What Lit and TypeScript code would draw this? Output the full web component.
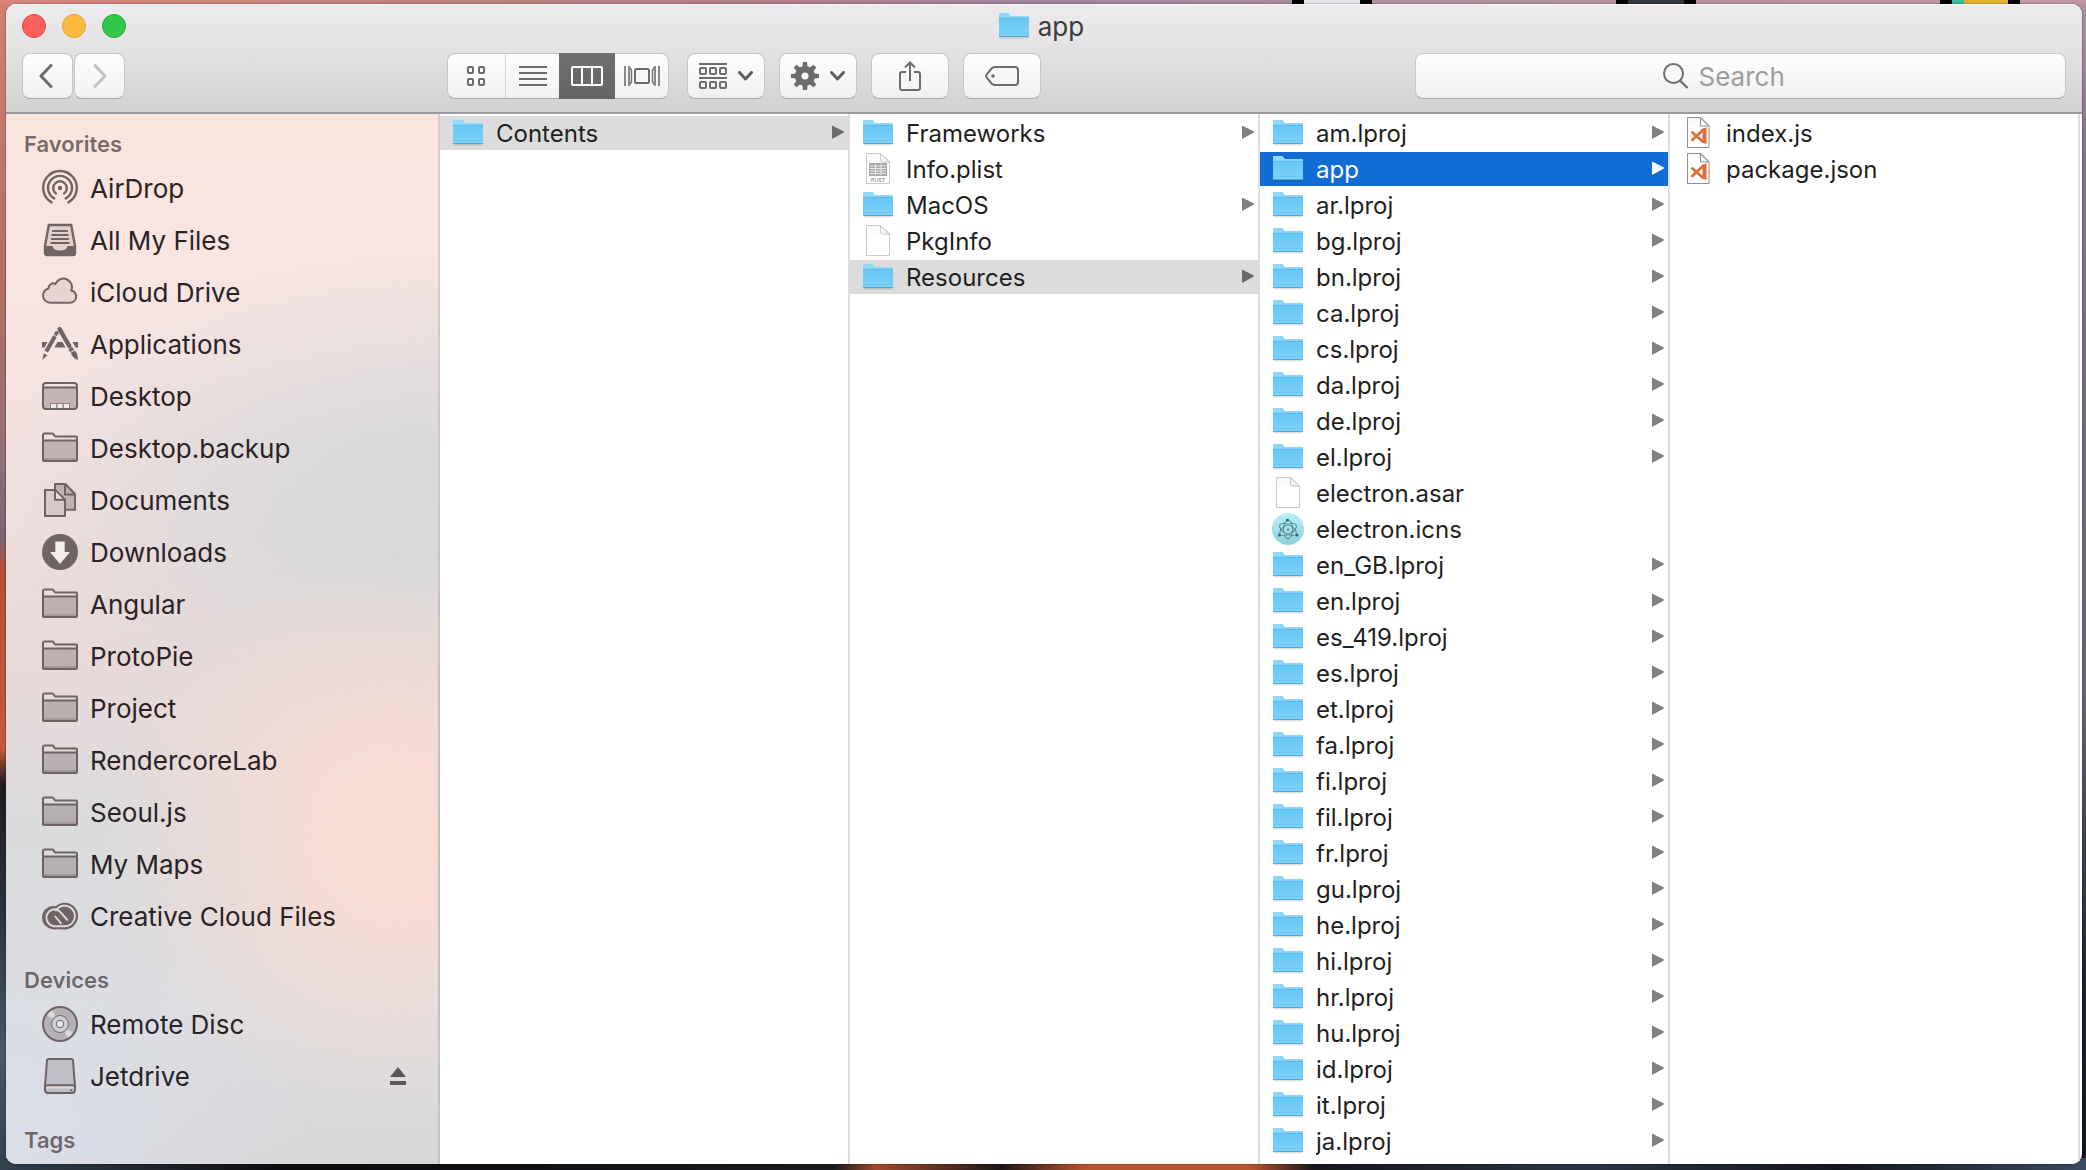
import { LitElement, html, svg, css, nothing } from "lit";
import { customElement, property } from "lit/decorators.js";

/* ---------- sidebar glyphs, drawn on a 36 × 36 grid ---------- */

const folderGlyph = svg`
  <path class="tint" d="M2 11h32v20H2z"/>
  <path class="line" d="M1 31V5q0-1.500 1.500-1.500H10q1 0 1.600.9l.8 1.300q.5.800 1.500.8H34q1 0 1 1V30q0 1-1 1H2q-1 0-1-1M1 11.500q0-1 1-1h32q1 0 1 1"/>
  <path class="soft" d="M2 29h32"/>`;

const glyphs: Record<string, unknown> = {
  airdrop: svg`
    <circle class="solid" cx="18" cy="18" r="2.200"/>
    <path class="bold" d="M13.800 23.400A6.800 6.800 0 1 1 22.200 23.400M12.200 28.400A12 12 0 1 1 23.800 28.400M9.600 32.400A16.800 16.800 0 1 1 26.400 32.400"/>`,
  files: svg`
    <path class="tint" d="M7 3h22l4 21v8H3v-8z" opacity=".4"/>
    <path class="bold" d="M6.800 3h22.400L33 24v7q0 2-2 2H5q-2 0-2-2v-7z"/>
    <path class="solid" d="M3 24h7.500q1 4.500 7.500 4.500t7.500-4.500H33v9H3z"/>
    <path class="line" d="M10 9h16M9.500 13h17M9 17h18M8.500 21h19"/>`,
  cloud: svg`
    <path class="tint" opacity=".35" d="M8.500 28.500a7.300 7.300 0 0 1-1.800-14.200a4.800 4.800 0 0 1 6.800-4.300a8.700 8.700 0 0 1 16.300 5.800a6.400 6.400 0 0 1-2.300 12.700z"/>
    <path class="line" d="M8 28.700a7.200 7.200 0 0 1-1.500-14.200a4.800 4.800 0 0 1 6.900-4.600a8.500 8.500 0 0 1 16 6.600a6.200 6.200 0 0 1-.9 12.200z"/>`,
  apps: svg`
    <path class="solid" d="M0 16h5.500l-3 5.500H0zM12.500 21.500l3-5.500h5l3 5.500zM30.500 16H36v5.500h-2.500z"/>
    <path d="M17.600 3.200L27.300 20" stroke="currentColor" stroke-width="4.400" stroke-linecap="round"/>
    <path d="M28.300 22l1.800 3" stroke="currentColor" stroke-width="4.400"/>
    <path class="solid" d="M28.800 26.800l4-2.300q4 4.500 2.700 9.500q-5-1.700-6.700-7.200z"/>
    <path d="M14.200 7.800l.5-.8" stroke="currentColor" stroke-width="4" stroke-linecap="round"/>
    <path d="M13 10.300L4.200 25.500" stroke="currentColor" stroke-width="4"/>
    <path class="solid" d="M1.800 27.200l3.600 2.100L.3 34z"/>`,
  desktop: svg`
    <path class="tint" d="M2 10h32v20H2z"/>
    <rect class="line" x="1" y="5" width="34" height="26" rx="3"/>
    <path class="line" d="M2 9.500h32"/>
    <path class="pale" d="M9 26h5v4H9zM15.500 26h5v4h-5zM22 26h5v4h-5z"/>
    <path class="soft" d="M8.500 30v-4.500h19V30M14.800 26v4M21.200 26v4"/>`,
  folder: folderGlyph,
  documents: svg`
    <path class="tint" d="M13 2h10l10 10v16h-9V17l-8-9h-3z"/>
    <path class="tint" opacity=".45" d="M3 8h10v9h10v17H3z"/>
    <path class="line" d="M13 7V2h10.500L33 12v15.700h-9M23 2v10.500h10M3 8h10.500L23 17.500V34H3zM13 8v9.700h10"/>`,
  downloads: svg`
    <circle class="solid" cx="18" cy="18" r="18"/>
    <path class="white" d="M13.300 7.500h9.400v10.500H28L18 30L8 18h5.300z"/>`,
  creative: svg`
    <circle class="solid" cx="11.700" cy="19.600" r="11.700"/>
    <circle class="solid" cx="22.700" cy="18" r="13.300"/>
    <path class="solid" d="M11 25h13v6.300H11z"/>
    <g fill="none" stroke="#dedcdf" stroke-width="1.900" stroke-linecap="round">
      <path d="M12.500 11.300A8.500 8.500 0 0 0 11.700 28.200H22.700A10.200 10.200 0 1 0 14 12.600"/>
      <path d="M19 25.300L13.300 18.500M12.500 11.300q3.800.2 6.200 3l6.600 7.600"/>
    </g>`,
  disc: svg`
    <circle class="tint" cx="18" cy="18" r="17"/>
    <path class="pale" opacity=".65" d="M18 18L5 9a16 16 0 0 1 5-5zM18 18l13 9a16 16 0 0 1-5 5z"/>
    <circle class="line" cx="18" cy="18" r="17"/>
    <circle cx="18" cy="18" r="8.500" fill="#ced0d6" stroke="currentColor"/>
    <circle cx="18" cy="18" r="3.800" fill="#e2e3e8" stroke="currentColor"/>`,
  drive: svg`
    <path class="tint" opacity=".7" d="M5.500 1h25L33 28v7H3v-7z"/>
    <path class="line" d="M6.500 1h23q1.300 0 1.500 1.500L33 28v4q0 3-3 3H6q-3 0-3-3v-4L5 2.500Q5.200 1 6.500 1zM3 29q0-1.800 3-1.800h24q3 0 3 1.800"/>
    <path class="pale" opacity=".6" d="M4.500 28.500h27v2h-27z"/>
    <path class="solid" d="M28 31.300h2.200v2H28z"/>`,
};

/* ---------- file icons, drawn on a 32 × 32 grid ---------- */

const page = svg`
  <path d="M4.500.500h14.500l8.500 8.500V30.500H4.500z" fill="url(#paper)" stroke="#c9c9c9"/>
  <path d="M18.500.800v6q0 2 2 2.200l6.800.300z" fill="#f4f4f4" stroke="#c9c9c9"/>`;

const fileIcons: Record<string, unknown> = {
  folder: svg`
    <path d="M1.500 27.800h29" stroke="#000" stroke-opacity=".18"/>
    <path d="M1 4q0-1 1-1h8.500l2.500 3H30q1 0 1 1v5H1z" fill="#8fd9fb"/>
    <path d="M1 8h30v18.500H1z" fill="url(#blue)"/>
    <path d="M1 8.300h30" stroke="#5bb5e0" stroke-opacity=".7"/>
    <path d="M1 23.500h30" stroke="#5cb8e6" stroke-opacity=".4"/>
    <path d="M1 26.500h30" stroke="#55a6cf"/>`,
  page,
  plist: svg`${page}
    <path d="M7 10h18v13H7z" fill="#a9a9a9"/>
    <path d="M8 13h16M8 15.500h16M8 18h16M8 20.500h16M13.500 11v11M19 11v11" stroke="#e9e9e9"/>
    <text x="16" y="28.500" text-anchor="middle" font-size="5" font-weight="700" fill="#999" font-family="Inter, sans-serif">PLIST</text>`,
  electron: svg`
    <circle cx="16" cy="16" r="16" fill="url(#aqua)"/>
    <g fill="none" stroke="#4a7d88" stroke-width=".9">
      <ellipse cx="16" cy="16.500" rx="4.600" ry="9.300" stroke-dasharray="17 3 40"/>
      <ellipse cx="16" cy="16.500" rx="4.600" ry="9.300" transform="rotate(60 16 16.500)"/>
      <ellipse cx="16" cy="16.500" rx="4.600" ry="9.300" transform="rotate(-60 16 16.500)"/>
    </g>
    <g fill="#3b6570"><circle cx="16" cy="16.500" r="1"/><circle cx="15.500" cy="7" r="1.500"/><circle cx="7.500" cy="22" r="1.500"/><circle cx="25" cy="22" r="1.500"/></g>`,
  code: svg`
    <path d="M5.500.500h13.500l8 8V30.500H5.500z" fill="url(#paper)" stroke="#8e8e8e"/>
    <path d="M18.500 1v8h8z" fill="#fafafa" stroke="#8e8e8e"/>
    <path d="M9.500 14.800L21.500 25.300M9.500 23.800L21.500 12.500" fill="none" stroke="#dd6f37" stroke-width="2.800"/>
    <path d="M20.500 11.500l4-1v16.500l-4-1.200z" fill="#dd6f37"/>`,
};

/* Gradients shared by the file icons; each icon carries its own copy. */
const defs = svg`<defs>
  <linearGradient id="blue" x2="0" y2="1"><stop stop-color="#67c7f5"/><stop offset="1" stop-color="#7cd3f9"/></linearGradient>
  <linearGradient id="paper" x2="0" y2="1"><stop stop-color="#f6f6f6"/><stop offset=".4" stop-color="#fff"/></linearGradient>
  <linearGradient id="aqua" x2="0" y2="1"><stop stop-color="#b5eef7"/><stop offset="1" stop-color="#8fd0dc"/></linearGradient>
</defs>`;

@customElement("file-icon")
class FileIcon extends LitElement {
  @property() kind = "folder";

  static styles = css`
    :host { display: block; flex: none; width: 32px; height: 32px; }
    .icon { display: block; width: 32px; height: 32px; overflow: visible; }
  `;

  render() {
    return html`<svg class="icon" viewBox="0 0 32 32" aria-hidden="true">${defs}${fileIcons[this.kind]}</svg>`;
  }
}

/* ---------- sidebar ---------- */

interface Place { name: string; glyph: string; eject?: boolean }
interface Section { title: string; places: Place[] }

const sections: Section[] = [
  {
    title: "Favorites",
    places: [
      { name: "AirDrop", glyph: "airdrop" },
      { name: "All My Files", glyph: "files" },
      { name: "iCloud Drive", glyph: "cloud" },
      { name: "Applications", glyph: "apps" },
      { name: "Desktop", glyph: "desktop" },
      { name: "Desktop.backup", glyph: "folder" },
      { name: "Documents", glyph: "documents" },
      { name: "Downloads", glyph: "downloads" },
      { name: "Angular", glyph: "folder" },
      { name: "ProtoPie", glyph: "folder" },
      { name: "Project", glyph: "folder" },
      { name: "RendercoreLab", glyph: "folder" },
      { name: "Seoul.js", glyph: "folder" },
      { name: "My Maps", glyph: "folder" },
      { name: "Creative Cloud Files", glyph: "creative" },
    ],
  },
  {
    title: "Devices",
    places: [
      { name: "Remote Disc", glyph: "disc" },
      { name: "Jetdrive", glyph: "drive", eject: true },
    ],
  },
  { title: "Tags", places: [] },
];

@customElement("finder-sidebar")
class FinderSidebar extends LitElement {
  static styles = css`
    :host {
      display: block;
      box-sizing: border-box;
      padding-top: 12px;
      border-right: 2px solid rgba(70, 50, 50, 0.16);
      background:
        radial-gradient(ellipse 68% 27% at 90% 69%, #fbdcd2 12%, rgba(251, 220, 210, 0) 100%),
        radial-gradient(ellipse 115% 25% at 105% 38%, #d7d9db 20%, rgba(215, 217, 219, 0) 100%),
        radial-gradient(ellipse 70% 18% at 0% 96%, #dbdfea, rgba(219, 223, 234, 0) 100%),
        linear-gradient(#fae4de, #f7e4e2 22%, #f1dedc 40%, #ead9d9 52%, #dadbdd 68%, #dcdde1 85%, #d8d7d8);
    }
    .title {
      margin: 0;
      padding-left: 18px;
      font-size: 22px;
      font-weight: 600;
      line-height: 36px;
      color: rgba(45, 30, 30, 0.64);
    }
    .places { list-style: none; margin: 0 0 20px; padding: 0; }
    .places:last-child { margin-bottom: 0; }
    .place { display: flex; align-items: center; height: 52px; padding: 0 32px 0 36px; }
    .link {
      flex: 1;
      display: flex;
      align-items: center;
      gap: 12px;
      font-size: 26px;
      line-height: 50px;
      color: #2a2325;
      text-decoration: none;
      white-space: nowrap;
    }
    .name { padding-top: 2px; }
    .glyph { flex: none; width: 36px; height: 36px; color: #706363; fill: none; overflow: visible; }
    .glyph .solid { fill: currentColor; }
    .glyph .tint { fill: rgba(90, 75, 80, 0.3); }
    .glyph .pale { fill: #f0eded; }
    .glyph .white { fill: #f3eded; }
    .glyph .line { stroke: currentColor; stroke-width: 2; }
    .glyph .bold { stroke: currentColor; stroke-width: 2.4; stroke-linecap: round; }
    .glyph .soft { stroke: currentColor; stroke-width: 1; opacity: 0.6; }
    .eject { width: 16px; height: 18px; padding: 0; border: 0; background: none; color: #5c5659; }
    .eject-mark { display: block; fill: currentColor; }
  `;

  render() {
    return html`${sections.map(
      (section) => html`
        <h2 class="title">${section.title}</h2>
        <ul class="places">
          ${section.places.map(
            (place) => html`<li class="place">
              <a class="link" href="#">
                <svg class="glyph" viewBox="0 0 36 36" aria-hidden="true">${glyphs[place.glyph]}</svg>
                <span class="name">${place.name}</span>
              </a>
              ${place.eject
                ? html`<button class="eject" aria-label="Eject ${place.name}">
                    <svg class="eject-mark" width="16" height="18" viewBox="0 0 16 18"><path d="M8 0l8 10H0zM0 14h16v4H0z"/></svg>
                  </button>`
                : nothing}
            </li>`
          )}
        </ul>
      `
    )}`;
  }
}

/* ---------- browser columns ---------- */

interface Entry { name: string; kind: string; state?: "path" | "current" }

const dir = (name: string, state?: Entry["state"]): Entry => ({ name, kind: "folder", state });
const locales = (codes: string) => codes.split(" ").map((code) => dir(`${code}.lproj`));

const columns: Entry[][] = [
  [dir("Contents", "path")],
  [
    dir("Frameworks"),
    { name: "Info.plist", kind: "plist" },
    dir("MacOS"),
    { name: "PkgInfo", kind: "page" },
    dir("Resources", "path"),
  ],
  [
    ...locales("am"),
    dir("app", "current"),
    ...locales("ar bg bn ca cs da de el"),
    { name: "electron.asar", kind: "page" },
    { name: "electron.icns", kind: "electron" },
    ...locales("en_GB en es_419 es et fa fi fil fr gu he hi hr hu id it ja"),
  ],
  [
    { name: "index.js", kind: "code" },
    { name: "package.json", kind: "code" },
  ],
];

@customElement("finder-column")
class FinderColumn extends LitElement {
  @property({ attribute: false }) entries: Entry[] = [];

  static styles = css`
    :host { display: block; min-width: 0; border-right: 2px solid #dedede; background: #fff; }
    .list { list-style: none; margin: 0; padding: 2px 0 0; }
    .item { padding-bottom: 2px; }
    .entry {
      display: flex;
      align-items: center;
      gap: 12px;
      width: 100%;
      height: 34px;
      padding: 0 4px 0 12px;
      border: 0;
      background: none;
      font: inherit;
      font-size: 24px;
      line-height: 32px;
      color: #1f1f1f;
      text-align: left;
    }
    .path { background: #dcdcdc; }
    .current { background: #116cd6; color: #fff; }
    .name { flex: 1; min-width: 0; padding-top: 2px; overflow: hidden; text-overflow: ellipsis; white-space: nowrap; }
    .arrow { flex: none; width: 12px; height: 16px; fill: #808080; }
    .path .arrow { fill: #6b6b6b; }
    .current .arrow { fill: #fff; }
  `;

  render() {
    return html`<ul class="list">
      ${this.entries.map(
        (entry) => html`<li class="item">
          <button class="entry ${entry.state ?? ""}">
            <file-icon .kind=${entry.kind}></file-icon>
            <span class="name">${entry.name}</span>
            ${entry.kind === "folder"
              ? html`<svg class="arrow" viewBox="0 0 12 16" aria-hidden="true"><path d="M0 1.500q0-1.200 1-.6l10.500 5.400q.7.700 0 1.400L1 13.600q-1 .4-1-.6z"/></svg>`
              : nothing}
          </button>
        </li>`
      )}
    </ul>`;
  }
}

/* ---------- title bar and toolbar ---------- */

const chevron = svg`<path d="M1.500 1.500l6 6.500L13.500 1.500" fill="none" stroke="#5e5e5e" stroke-width="3" stroke-linecap="round" stroke-linejoin="round"/>`;

const gearTeeth = [0, 45, 90, 135, 180, 225, 270, 315].map(
  (angle) => svg`<path d="M11.300 6L12 0h4l.7 6z" transform="rotate(${angle} 14 14)"/>`
);

@customElement("finder-toolbar")
class FinderToolbar extends LitElement {
  static styles = css`
    :host {
      display: block;
      box-sizing: border-box;
      height: 110px;
      padding: 0 16px;
      border-bottom: 2px solid #9c9a9c;
      background: linear-gradient(#edebee, #e3e1e4 45%, #d3d1d4);
      box-shadow: inset 0 1px 0 #f8f7f8;
      color: #3c3b3d;
    }
    .titlebar { display: grid; grid-template-columns: 1fr auto 1fr; align-items: center; height: 44px; margin-bottom: 5px; }
    .lights { display: flex; gap: 16px; }
    .light { box-sizing: border-box; width: 24px; height: 24px; padding: 0; border: 1px solid; border-radius: 50%; }
    .close { background: #fc605c; border-color: #e2463f; }
    .minimize { background: #fdbc40; border-color: #e0a033; }
    .zoom { background: #34c84a; border-color: #27a935; }
    .heading { display: flex; align-items: center; gap: 8px; margin: 0; padding-right: 6px; font-size: 26px; font-weight: 400; line-height: 30px; }
    .folder-name { padding-top: 2px; }
    .tools { display: flex; align-items: stretch; height: 46px; gap: 14px; }
    .nav { display: flex; gap: 1px; flex: 0 0 411px; }
    .button {
      box-sizing: border-box;
      display: flex;
      align-items: center;
      justify-content: center;
      gap: 11px;
      width: 78px;
      padding: 0;
      border: 1px solid #c6c4c6;
      border-bottom-color: #a9a7a9;
      border-radius: 8px;
      background: linear-gradient(#fefefe, #f0f0f0);
      color: #6c6c6c;
    }
    .nav .button { width: 51px; padding-right: 4px; }
    .nav .button + .button { padding-right: 0; }
    .views { display: flex; margin-right: 4px; border: 1px solid #c6c4c6; border-bottom-color: #a9a7a9; border-radius: 8px; background: linear-gradient(#fefefe, #f0f0f0); }
    .view { display: flex; align-items: center; justify-content: center; width: 53px; padding: 0; border: 0; background: none; color: #6c6c6c; }
    .view:first-child { width: 58px; border-right: 1px solid #d5d5d5; }
    .view.active { width: 56px; margin: -1px 0; background: linear-gradient(#6e6e6e, #656565); color: #fff; }
    .art { display: block; flex: none; fill: none; stroke: currentColor; stroke-width: 2; }
    .gear { fill: currentColor; stroke: none; }
    .search {
      box-sizing: border-box;
      display: flex;
      align-items: center;
      justify-content: center;
      gap: 10px;
      flex: 0 1 651px;
      margin-left: auto;
      border: 1px solid #cbc9cb;
      border-bottom-color: #a9a7a9;
      border-radius: 8px;
      background: linear-gradient(#fefefe, #f0f0f0);
      color: #6f6f6f;
    }
    .query { width: 120px; padding: 2px 0 0; border: 0; outline: 0; background: none; font: inherit; font-size: 26px; line-height: 30px; color: #333; }
    .query::placeholder { color: #9c9c9c; opacity: 1; }
  `;

  render() {
    return html`
      <div class="titlebar">
        <div class="lights">
          <button class="light close" aria-label="Close"></button>
          <button class="light minimize" aria-label="Minimize"></button>
          <button class="light zoom" aria-label="Zoom"></button>
        </div>
        <h1 class="heading"><file-icon kind="folder"></file-icon><span class="folder-name">app</span></h1>
      </div>
      <div class="tools">
        <div class="nav">
          <button class="button" aria-label="Back">
            <svg class="art" width="14" height="24" viewBox="0 0 14 24"><path d="M12 1.500L2 12l10 10.500" stroke-width="3" stroke-linecap="round" stroke-linejoin="round"/></svg>
          </button>
          <button class="button" aria-label="Forward" disabled>
            <svg class="art" width="14" height="24" viewBox="0 0 14 24"><path d="M2 1.500L12 12L2 22.500" stroke="#c2c2c2" stroke-width="3" stroke-linecap="round" stroke-linejoin="round"/></svg>
          </button>
        </div>
        <div class="views" role="group" aria-label="View">
          <button class="view" aria-label="Icons">
            <svg class="art" width="20" height="20" viewBox="0 0 20 20"><rect x="1" y="1" width="5" height="6" rx="1"/><rect x="12" y="1" width="5" height="6" rx="1"/><rect x="1" y="13" width="5" height="6" rx="1"/><rect x="12" y="13" width="5" height="6" rx="1"/></svg>
          </button>
          <button class="view" aria-label="List">
            <svg class="art" width="28" height="20" viewBox="0 0 28 20"><path d="M0 1h28M0 7h28M0 13h28M0 19h28"/></svg>
          </button>
          <button class="view active" aria-label="Columns" aria-pressed="true">
            <svg class="art" width="32" height="20" viewBox="0 0 32 20"><rect x="1" y="1" width="30" height="18" rx="1"/><path d="M11 1v18M21 1v18"/></svg>
          </button>
          <button class="view" aria-label="Cover Flow">
            <svg class="art" width="36" height="20" viewBox="0 0 36 20"><path d="M1 0v20M5 0v20M31 0v20M35 0v20" stroke-width="1.600"/><path d="M6 1.500l1.500 3v11L6 18.500M30 1.500l-1.500 3v11l1.500 3" stroke-width="1.400"/><rect x="11" y="3" width="14" height="14" rx="1.500"/></svg>
          </button>
        </div>
        <button class="button" aria-label="Arrange">
          <svg class="art" width="28" height="26" viewBox="0 0 28 26"><path d="M0 1h28M0 15h28"/><rect x="1" y="5" width="6" height="6" rx="1"/><rect x="11" y="5" width="6" height="6" rx="1"/><rect x="21" y="5" width="6" height="6" rx="1"/><rect x="1" y="19" width="6" height="6" rx="1"/><rect x="11" y="19" width="6" height="6" rx="1"/><rect x="21" y="19" width="6" height="6" rx="1"/></svg>
          <svg width="15" height="10" viewBox="0 0 15 10">${chevron}</svg>
        </button>
        <button class="button" aria-label="Action">
          <svg class="art gear" width="28" height="28" viewBox="0 0 28 28"><path fill-rule="evenodd" d="M14 4a10 10 0 1 0 0 20a10 10 0 1 0 0-20zM14 10.500a3.500 3.500 0 1 1 0 7a3.500 3.500 0 1 1 0-7z"/>${gearTeeth}</svg>
          <svg width="15" height="10" viewBox="0 0 15 10">${chevron}</svg>
        </button>
        <button class="button" aria-label="Share">
          <svg class="art" width="22" height="30" viewBox="0 0 22 30"><path d="M7 11H3q-2 0-2 2v14q0 2 2 2h16q2 0 2-2V13q0-2-2-2h-4M11 20V1.500M6 6.500L11 1.500L16 6.500"/></svg>
        </button>
        <button class="button" aria-label="Edit Tags">
          <svg class="art" width="34" height="20" viewBox="0 0 34 20"><path d="M10 1h20q3 0 3 3v12q0 3-3 3H10q-2 0-3.400-1.500L1.700 11.600q-1.200-1.600 0-3.200L6.600 2.500Q8 1 10 1z"/><circle cx="8" cy="10" r="1.800" fill="currentColor" stroke="none"/></svg>
        </button>
        <label class="search">
          <svg class="art" width="26" height="26" viewBox="0 0 26 26"><circle cx="10.500" cy="10.500" r="9.500"/><path d="M17 17.500l7.500 7.500" stroke-width="2.400"/></svg>
          <input class="query" type="search" placeholder="Search" aria-label="Search" />
        </label>
      </div>
    `;
  }
}

/* ---------- desktop and window ---------- */

@customElement("app-root")
class AppRoot extends LitElement {
  static styles = css`
    :host {
      display: flex;
      box-sizing: border-box;
      min-height: 100vh;
      padding: 4px 4px 6px 6px;
      font-family: Inter, "Liberation Sans", sans-serif;
      /* The strips of wallpaper and other windows that show round the edges. */
      background:
        linear-gradient(90deg, #000 12px, #e6e6ea 12px 68px, #000 68px) 1292px 0 / 80px 4px no-repeat,
        linear-gradient(90deg, #000 12px, #333844 12px 68px, #000 68px) 1616px 0 / 80px 4px no-repeat,
        linear-gradient(90deg, #000 12px, #3cbf9f 12px 24px, #e5b02f 24px 68px, #000 68px) 1940px 0 / 80px 4px no-repeat,
        linear-gradient(90deg, #da857c, #b77f88 35%, #9f86a2 50%, #b0909e 70%, #bf98a6) 0 0 / 100% 4px no-repeat,
        linear-gradient(90deg, #33404f, #0c0a0d 14%, #1a1a1f 40%, #a04a2c 42%, #1c1718 48%, #b8532f 52%, #b8532f 60%, #15161c 63%, #2b3444 76%, #14161e 88%, #3a4a5e) 0 100% / 100% 12px no-repeat,
        linear-gradient(#cf7f74, #b3705f 24%, #8d6d77 40%, #7d6274 46%, #b94d33 49%, #c15a3c 64%, #201a20 67%, #2a3440 78%, #46586c 90%, #33404f) 0 0 / 12px 100% no-repeat,
        linear-gradient(#b491a0, #80768a 12%, #66647a 60%, #1d2029 84%, #12141b) 100% 0 / 12px 100% no-repeat;
    }
    .window { flex: 1; display: flex; flex-direction: column; min-width: 0; border-radius: 10px; overflow: hidden; background: #fff; box-shadow: 0 0 2px rgba(0, 0, 0, 0.6); }
    .body { flex: 1; display: flex; }
    .sidebar { flex: 0 0 434px; }
    .columns { flex: 1; display: grid; grid-template-columns: repeat(4, 1fr); min-width: 0; padding-right: 2px; }
  `;

  render() {
    return html`<main class="window">
      <finder-toolbar></finder-toolbar>
      <div class="body">
        <finder-sidebar class="sidebar"></finder-sidebar>
        <div class="columns">${columns.map((entries) => html`<finder-column .entries=${entries}></finder-column>`)}</div>
      </div>
    </main>`;
  }
}
